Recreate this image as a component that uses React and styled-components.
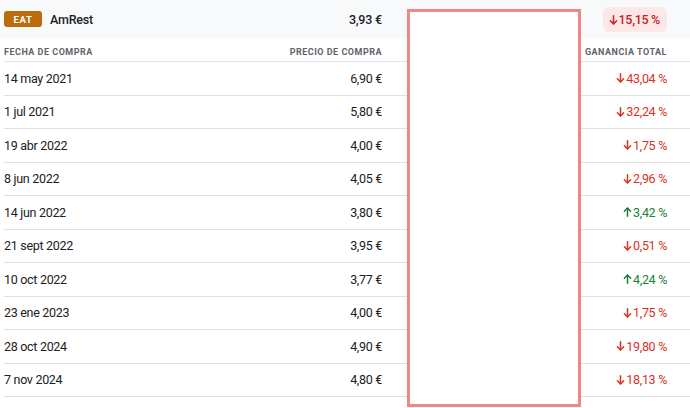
import React from 'react';
import styled, { createGlobalStyle } from 'styled-components';

const GlobalStyle = createGlobalStyle`
  html, body {
    margin: 0;
    padding: 0;
    background: #ffffff;
    font-family: Roboto, "Liberation Sans", Arial, sans-serif;
    color: #202124;
  }
`;

const Page = styled.div`
  position: relative;
  width: 690px;
  height: 408px;
  overflow: hidden;
  background: #fff;
`;

const COLS = '200px 178px 200px 85px';

const Summary = styled.div`
  display: grid;
  grid-template-columns: ${COLS};
  align-items: center;
  height: 38px;
  padding: 0 23px 0 4px;
  background: #f8f9fa;
`;

const Stock = styled.div`
  display: flex;
  align-items: center;
  gap: 8px;
`;

const Ticker = styled.span`
  display: inline-flex;
  align-items: center;
  justify-content: center;
  width: 38px;
  height: 16px;
  border-radius: 3px;
  background: #bd6a0c;
  color: #fff;
  font-size: 9.5px;
  font-weight: 700;
  letter-spacing: 0.7px;
`;

const Name = styled.span`
  font-size: 12.5px;
  letter-spacing: -0.2px;
  font-weight: 500;
  color: #202124;
`;

const Cell = styled.div`
  font-size: 12.5px;
  letter-spacing: -0.3px;
  display: flex;
  justify-content: ${(p) => (p.$right ? 'flex-end' : 'flex-start')};
  align-items: center;
  white-space: nowrap;
  color: #202124;
`;

const Pill = styled.span`
  display: inline-flex;
  align-items: center;
  gap: 1px;
  height: 25px;
  padding: 0 7px 0 6px;
  border-radius: 6px;
  background: #fce8e6;
  color: #c5221f;
  font-size: 12.5px;
  letter-spacing: -0.3px;
  font-weight: 500;
  margin-top: 1px;
`;

const HeadRow = styled.div`
  display: grid;
  grid-template-columns: ${COLS};
  align-items: center;
  height: 23px;
  margin-left: 4px;
  padding-right: 23px;
  border-bottom: 1px solid #e3e4e9;
`;

const HeadCell = styled.div`
  display: flex;
  justify-content: ${(p) => (p.$right ? 'flex-end' : 'flex-start')};
  font-size: 9px;
  font-weight: 700;
  letter-spacing: 0.5px;
  color: #5f6368;
  text-transform: uppercase;
  white-space: nowrap;
  padding-top: 4px;
`;

const Row = styled.div`
  display: grid;
  grid-template-columns: ${COLS};
  align-items: center;
  height: 32.5px;
  margin-left: 4px;
  padding-right: 23px;
  border-bottom: 1px solid #e0e0e0;
`;

const Change = styled.span`
  display: inline-flex;
  align-items: center;
  gap: 1px;
  color: ${(p) => (p.$up ? '#188038' : '#d93025')};
`;

const Mask = styled.div`
  position: absolute;
  left: 407px;
  top: 9px;
  width: 168px;
  height: 392px;
  background: #fff;
  border: 3px solid #f08787;
`;

function Arrow({ up }) {
  return (
    <svg width="9" height="10" viewBox="0 0 9 10" fill="none" stroke="currentColor" strokeWidth="1.5" strokeLinecap="round" strokeLinejoin="round">
      {up ? (
        <>
          <path d="M4.5 9.2V1.2" />
          <path d="M1.4 4.3L4.5 1.1L7.6 4.3" />
        </>
      ) : (
        <>
          <path d="M4.5 0.8V8.8" />
          <path d="M1.4 5.7L4.5 8.9L7.6 5.7" />
        </>
      )}
    </svg>
  );
}

const purchases = [
  { date: '14 may 2021', price: '6,90 €', gain: '43,04 %', up: false },
  { date: '1 jul 2021', price: '5,80 €', gain: '32,24 %', up: false },
  { date: '19 abr 2022', price: '4,00 €', gain: '1,75 %', up: false },
  { date: '8 jun 2022', price: '4,05 €', gain: '2,96 %', up: false },
  { date: '14 jun 2022', price: '3,80 €', gain: '3,42 %', up: true },
  { date: '21 sept 2022', price: '3,95 €', gain: '0,51 %', up: false },
  { date: '10 oct 2022', price: '3,77 €', gain: '4,24 %', up: true },
  { date: '23 ene 2023', price: '4,00 €', gain: '1,75 %', up: false },
  { date: '28 oct 2024', price: '4,90 €', gain: '19,80 %', up: false },
  { date: '7 nov 2024', price: '4,80 €', gain: '18,13 %', up: false },
];

export default function App() {
  return (
    <Page>
      <GlobalStyle />
      <Summary>
        <Stock>
          <Ticker>EAT</Ticker>
          <Name>AmRest</Name>
        </Stock>
        <Cell $right>
          <Name>3,93 €</Name>
        </Cell>
        <div />
        <Cell $right>
          <Pill>
            <Arrow />
            15,15 %
          </Pill>
        </Cell>
      </Summary>

      <HeadRow>
        <HeadCell>Fecha de compra</HeadCell>
        <HeadCell $right>Precio de compra</HeadCell>
        <HeadCell />
        <HeadCell $right>Ganancia total</HeadCell>
      </HeadRow>

      {purchases.map((p) => (
        <Row key={p.date}>
          <Cell>{p.date}</Cell>
          <Cell $right>{p.price}</Cell>
          <div />
          <Cell $right>
            <Change $up={p.up}>
              <Arrow up={p.up} />
              {p.gain}
            </Change>
          </Cell>
        </Row>
      ))}

      <Mask />
    </Page>
  );
}
